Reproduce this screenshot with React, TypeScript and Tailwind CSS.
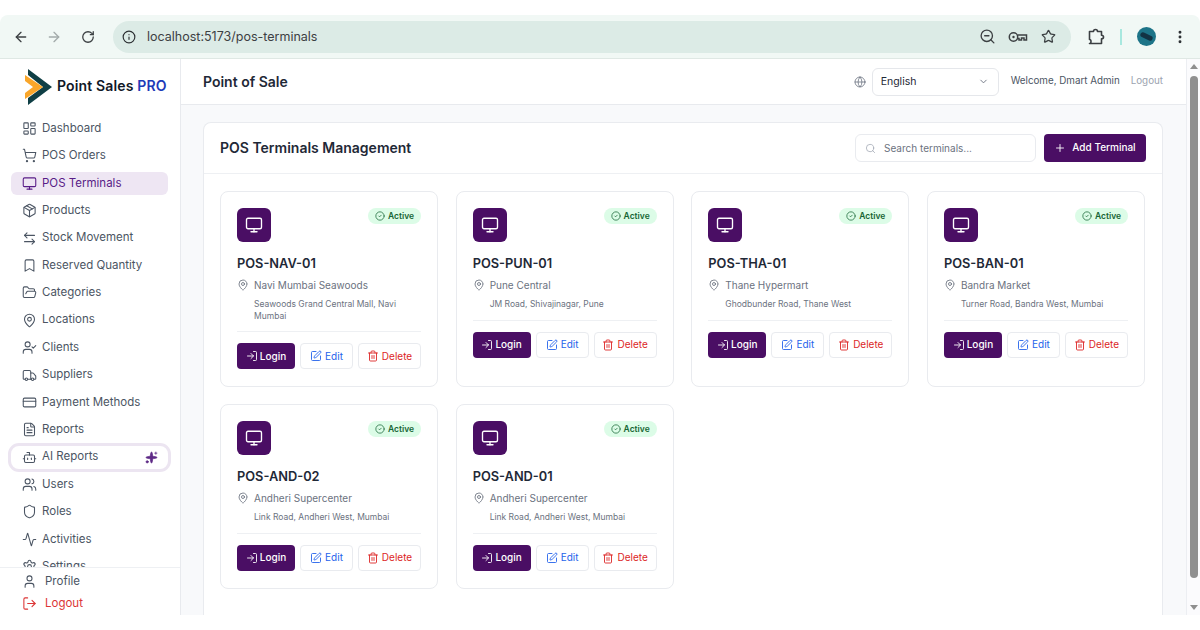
import {
  Activity,
  ArrowLeft,
  ArrowLeftRight,
  ArrowRight,
  Bookmark,
  Bot,
  ChevronDown,
  CircleCheck,
  CreditCard,
  FileText,
  FolderOpen,
  Globe,
  Info,
  LayoutDashboard,
  LogIn,
  LogOut,
  MapPin,
  Monitor,
  MoreVertical,
  Package,
  Plus,
  RotateCw,
  Search,
  Settings,
  Shield,
  ShoppingCart,
  Sparkles,
  SquarePen,
  Star,
  Trash2,
  Truck,
  User,
  UserCheck,
  Users,
  ZoomOut,
} from "lucide-react"

const NAV_ITEMS = [
  { label: "Dashboard", icon: LayoutDashboard },
  { label: "POS Orders", icon: ShoppingCart },
  { label: "POS Terminals", icon: Monitor, active: true },
  { label: "Products", icon: Package },
  { label: "Stock Movement", icon: ArrowLeftRight },
  { label: "Reserved Quantity", icon: Bookmark },
  { label: "Categories", icon: FolderOpen },
  { label: "Locations", icon: MapPin },
  { label: "Clients", icon: UserCheck },
  { label: "Suppliers", icon: Truck },
  { label: "Payment Methods", icon: CreditCard },
  { label: "Reports", icon: FileText },
  { label: "AI Reports", icon: Bot, ai: true },
  { label: "Users", icon: Users },
  { label: "Roles", icon: Shield },
  { label: "Activities", icon: Activity },
  { label: "Settings", icon: Settings },
]

const TERMINALS = [
  { code: "POS-NAV-01", place: "Navi Mumbai Seawoods", address: "Seawoods Grand Central Mall, Navi Mumbai" },
  { code: "POS-PUN-01", place: "Pune Central", address: "JM Road, Shivajinagar, Pune" },
  { code: "POS-THA-01", place: "Thane Hypermart", address: "Ghodbunder Road, Thane West" },
  { code: "POS-BAN-01", place: "Bandra Market", address: "Turner Road, Bandra West, Mumbai" },
  { code: "POS-AND-02", place: "Andheri Supercenter", address: "Link Road, Andheri West, Mumbai" },
  { code: "POS-AND-01", place: "Andheri Supercenter", address: "Link Road, Andheri West, Mumbai" },
]

function KeyIcon() {
  return (
    <svg width="20" height="14" viewBox="0 0 20 14" fill="none" stroke="#3c4043" strokeWidth="1.5" className="ml-[12px]">
      <circle cx="5.5" cy="7" r="4.2" />
      <circle cx="5.5" cy="7" r="1.2" fill="#3c4043" stroke="none" />
      <path d="M9.7 5H18.5V10H16V8H13.5V10H11V8.5H9.7" />
    </svg>
  )
}

function ExtensionIcon() {
  return (
    <svg width="18" height="18" viewBox="0 0 18 18" fill="none" stroke="#3c4043" strokeWidth="1.6" strokeLinejoin="round" className="ml-[16px] shrink-0">
      <path d="M2.5 3.5H6.5C6.5 0.8 10.5 0.8 10.5 3.5H14.5V7.2C17.2 7.2 17.2 10.8 14.5 10.8V15.5H2.5C3.4 15.5 4 14.8 4 13.5C4 12.2 3.4 11.5 2.5 11.5Z" />
    </svg>
  )
}

function BrowserBar() {
  return (
    <div className="flex h-[44px] items-center rounded-t-lg border-b border-[#dfe8e4] bg-[#f1f8f5] pl-[13px]">
      <ArrowLeft size={16} strokeWidth={2} className="shrink-0 text-[#3c4043]" />
      <ArrowRight size={16} strokeWidth={2} className="ml-[17px] shrink-0 text-[#a3abaa]" />
      <RotateCw size={14} strokeWidth={2.2} className="ml-[19px] shrink-0 text-[#3c4043]" />
      <div className="ml-[18px] flex h-[32px] w-[958px] shrink-0 items-center rounded-full bg-[#dcebe6] pl-[8px] pr-[15px]">
        <span className="flex h-[22px] w-[16px] items-center justify-center">
          <Info size={14} strokeWidth={2} className="text-[#2c3033]" />
        </span>
        <span className="ml-[10px] pt-[2px] text-[12.5px] text-[#3c4043]">localhost:5173/pos-terminals</span>
        <div className="ml-auto flex items-center text-[#3c4043]">
          <ZoomOut size={17} strokeWidth={1.9} />
          <KeyIcon />
          <Star size={15} strokeWidth={2} className="ml-[13px]" />
        </div>
      </div>
      <ExtensionIcon />
      <span className="ml-[15px] h-[16px] w-[2px] shrink-0 bg-[#a8e8df]" />
      <span className="ml-[15px] flex h-[19px] w-[19px] shrink-0 items-center justify-center overflow-hidden rounded-full bg-[#1d7488]">
        <span className="h-[5px] w-[13px] rotate-[25deg] rounded-full bg-[#123344]" />
      </span>
      <MoreVertical size={16} strokeWidth={2.4} className="ml-[16px] shrink-0 text-[#2c3033]" />
    </div>
  )
}

function Logo() {
  return (
    <div className="flex h-[54px] shrink-0 items-center pl-[25px]">
      <svg width="28" height="36" viewBox="0 0 28 36" className="mt-[1px] shrink-0">
        <path d="M3 0 L27 18 L3 36 L3 29 L18 18 L3 6 Z" fill="#0f3f45" />
        <path d="M0 6 L18 18 L0 30 L0 24 L8 18 L0 12 Z" fill="#f9a62b" />
      </svg>
      <span className="ml-[4px] -mt-[1px] whitespace-nowrap text-[14px] font-semibold tracking-[0.15px] text-[#111827]">
        Point Sales <span className="text-[#1d3bb8]">PRO</span>
      </span>
    </div>
  )
}

function Sidebar() {
  return (
    <aside className="flex w-[181px] shrink-0 flex-col border-r border-[#e8eaee] bg-white">
      <Logo />
      <nav className="mt-[3px] flex min-h-0 flex-1 flex-col overflow-hidden pb-[3px] pl-[11px] pr-[12px] pt-[1px]">
        {NAV_ITEMS.map((item) => {
          const Icon = item.icon
          let cls = "text-[#4b5563]"
          if (item.active) cls = "rounded-md bg-[#eee6f3] text-[#581c87]"
          if (item.ai) cls = "rounded-lg bg-white text-[#4b5563] outline-[3px] outline-[#ece5f1]"
          return (
            <div key={item.label} className={`mb-[4.4px] flex h-[23px] shrink-0 items-center pl-[11px] pr-[10px] ${cls}`}>
              <Icon size={15} strokeWidth={1.7} className="shrink-0" />
              <span className="ml-[5px] text-[11.5px] leading-none">{item.label}</span>
              {item.ai && <Sparkles size={13} strokeWidth={1.5} fill="#5e2a86" className="ml-auto text-[#5e2a86]" />}
            </div>
          )
        })}
      </nav>
      <div className="flex h-[48px] shrink-0 flex-col border-t border-[#eef0f3] pl-[22px] pt-[2px]">
        <div className="flex h-[23px] items-center text-[#4b5563]">
          <User size={15} strokeWidth={1.7} />
          <span className="ml-[8px] text-[11.5px]">Profile</span>
        </div>
        <div className="flex h-[23px] items-center text-[#dc3535]">
          <LogOut size={15} strokeWidth={1.7} />
          <span className="ml-[8px] text-[11.5px]">Logout</span>
        </div>
      </div>
    </aside>
  )
}

function Header() {
  return (
    <header className="flex h-[46px] shrink-0 items-center border-b border-[#e8eaee] bg-white pl-[22px] pr-[23px]">
      <h1 className="text-[14px] font-semibold text-[#1f2937]">Point of Sale</h1>
      <Globe size={12} strokeWidth={1.6} className="ml-auto text-[#6b7280]" />
      <div className="ml-[6px] flex h-[28px] w-[127px] items-center rounded-md border border-[#e5e7eb] pl-[8px] pr-[9px]">
        <span className="text-[10.5px] text-[#1f2937]">English</span>
        <ChevronDown size={11} className="ml-auto text-[#6b7280]" />
      </div>
      <span className="ml-[12px] text-[9.8px] text-[#4b5563]">Welcome, Dmart Admin</span>
      <span className="ml-[11px] text-[9.8px] text-[#9ca3af]">Logout</span>
    </header>
  )
}

function TerminalCard({ code, place, address }: { code: string; place: string; address: string }) {
  return (
    <div className="rounded-lg border border-[#e9ebef] bg-white px-[16px] pb-[17px] pt-[16px]">
      <div className="flex items-start justify-between">
        <div className="flex h-[34px] w-[34px] items-center justify-center rounded-md bg-[#4a0e64]">
          <Monitor size={18} strokeWidth={1.8} className="text-white" />
        </div>
        <span className="flex h-[16px] items-center gap-[3px] rounded-full bg-[#dcfce7] px-[7px] text-[8.5px] font-semibold text-[#166534]">
          <CircleCheck size={10} strokeWidth={1.8} />
          Active
        </span>
      </div>
      <h3 className="mt-[13px] text-[12.8px] font-semibold leading-[18px] text-[#1f2937]">{code}</h3>
      <div className="mt-[4px] flex items-center text-[#6b7280]">
        <MapPin size={12} strokeWidth={1.7} />
        <span className="ml-[5px] text-[10px] leading-[16px]">{place}</span>
      </div>
      <p className="ml-[17px] mt-[6px] text-[8.5px] leading-[11.5px] text-[#6b7280]">{address}</p>
      <div className="mt-[9px] flex gap-[5px] border-t border-[#eef0f3] pt-[11px]">
        <button className="flex h-[26px] w-[58px] items-center justify-center gap-[2px] rounded bg-[#4a0e64] text-[10px] font-medium text-white">
          <LogIn size={12} strokeWidth={1.8} />
          Login
        </button>
        <button className="flex h-[26px] w-[53px] items-center justify-center gap-[3px] rounded border border-[#e9ebef] text-[10px] text-[#2563eb]">
          <SquarePen size={12} strokeWidth={1.8} />
          Edit
        </button>
        <button className="flex h-[26px] w-[63px] items-center justify-center gap-[3px] rounded border border-[#e9ebef] text-[10px] text-[#dc2626]">
          <Trash2 size={12} strokeWidth={1.8} />
          Delete
        </button>
      </div>
    </div>
  )
}

function Content() {
  return (
    <main className="min-h-0 flex-1 overflow-hidden bg-[#f8f9fb] pl-[22px] pr-[23px] pt-[17px]">
      <section className="h-full rounded-t-lg border border-b-0 border-[#e9ebef] bg-white">
        <div className="flex h-[51px] items-center border-b border-[#eef0f3] px-[16px]">
          <h2 className="-mt-[1px] text-[14px] font-semibold text-[#1f2937]">POS Terminals Management</h2>
          <div className="ml-auto flex h-[28px] w-[181px] items-center rounded-md border border-[#e9ebef] pl-[9px]">
            <Search size={11} strokeWidth={1.6} className="text-[#9ca3af]" />
            <span className="ml-[8px] text-[10px] text-[#6b7280]">Search terminals...</span>
          </div>
          <button className="ml-[8px] flex h-[28px] w-[102px] items-center justify-center gap-[6px] rounded bg-[#4a0e64] pb-[1px] text-[10px] font-medium text-white">
            <Plus size={12} strokeWidth={1.8} />
            Add Terminal
          </button>
        </div>
        <div className="grid grid-cols-4 gap-x-[17.6px] gap-y-[17px] pl-[16px] pr-[17px] pt-[17px]">
          {TERMINALS.map((t) => (
            <TerminalCard key={t.code} {...t} />
          ))}
        </div>
      </section>
    </main>
  )
}

function Scrollbar() {
  return (
    <div className="flex w-[14px] shrink-0 flex-col items-center border-l border-[#eceef2] bg-[#fbfbfd] pt-[5px]">
      <span className="h-0 w-0 border-x-[4px] border-b-[5px] border-x-transparent border-b-[#8f8f8f]" />
      <span className="mt-[7px] h-[502px] w-[8px] rounded-full bg-[#8f8f8f]" />
      <span className="mt-[27px] h-0 w-0 border-x-[4px] border-t-[5px] border-x-transparent border-t-[#8f8f8f]" />
    </div>
  )
}

export default function App() {
  return (
    <div className="h-[630px] w-[1200px] overflow-hidden bg-white pb-[15px] pt-[15px] font-['Inter','Liberation_Sans',sans-serif]">
      <div className="flex h-full flex-col">
        <BrowserBar />
        <div className="flex min-h-0 flex-1">
          <Sidebar />
          <div className="flex min-w-0 flex-1 flex-col">
            <Header />
            <Content />
          </div>
          <Scrollbar />
        </div>
      </div>
    </div>
  )
}
